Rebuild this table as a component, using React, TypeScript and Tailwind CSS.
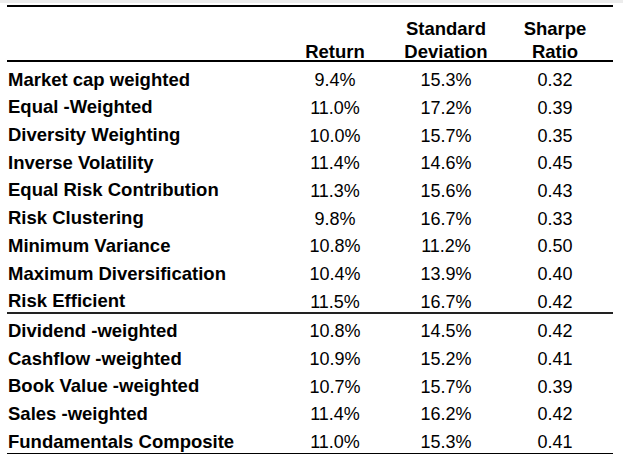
const rows1 = [
  ["Market cap weighted", "9.4%", "15.3%", "0.32"],
  ["Equal -Weighted", "11.0%", "17.2%", "0.39"],
  ["Diversity Weighting", "10.0%", "15.7%", "0.35"],
  ["Inverse Volatility", "11.4%", "14.6%", "0.45"],
  ["Equal Risk Contribution", "11.3%", "15.6%", "0.43"],
  ["Risk Clustering", "9.8%", "16.7%", "0.33"],
  ["Minimum Variance", "10.8%", "11.2%", "0.50"],
  ["Maximum Diversification", "10.4%", "13.9%", "0.40"],
  ["Risk Efficient", "11.5%", "16.7%", "0.42"],
];

const rows2 = [
  ["Dividend -weighted", "10.8%", "14.5%", "0.42"],
  ["Cashflow -weighted", "10.9%", "15.2%", "0.41"],
  ["Book Value -weighted", "10.7%", "15.7%", "0.39"],
  ["Sales -weighted", "11.4%", "16.2%", "0.42"],
  ["Fundamentals Composite", "11.0%", "15.3%", "0.41"],
];

const cols = "grid grid-cols-[273px_110px_112px_106px]";

const Row = ({ r }: { r: string[] }) => (
  <div className={`${cols} h-[27.7px] items-end pb-[1.5px] leading-none`}>
    <div className="pl-[1px] font-bold text-[18.5px]">{r[0]}</div>
    <div className="text-center">{r[1]}</div>
    <div className="text-center">{r[2]}</div>
    <div className="text-center">{r[3]}</div>
  </div>
);

const App = () => {
  return (
    <div
      className="w-[623px] h-[454px] bg-white text-black text-[18px] overflow-hidden"
      style={{ fontFamily: '"Liberation Sans", Arial, sans-serif' }}
    >
      <div className="h-[3px] bg-[#ececec]" />
      <div className="ml-[7px] w-[606px] mt-[2px]">
        <div className="h-[2px] bg-black" />
        <div className={`${cols} h-[53px] items-end font-bold text-[18.5px] leading-[23px]`}>
          <div />
          <div className="text-center translate-y-[3px]">Return</div>
          <div className="text-center translate-y-[3px]">
            Standard
            <br />
            Deviation
          </div>
          <div className="text-center translate-y-[3px]">
            Sharpe
            <br />
            Ratio
          </div>
        </div>
        <div className="h-[2px] bg-black" />
        <div className="pt-[1px]">
          {rows1.map((r) => (
            <Row key={r[0]} r={r} />
          ))}
        </div>
        <div className="h-[2px] bg-[#222]" />
        <div>
          {rows2.map((r) => (
            <Row key={r[0]} r={r} />
          ))}
        </div>
        <div className="h-[2px] bg-black" />
      </div>
    </div>
  );
};

export default App;
